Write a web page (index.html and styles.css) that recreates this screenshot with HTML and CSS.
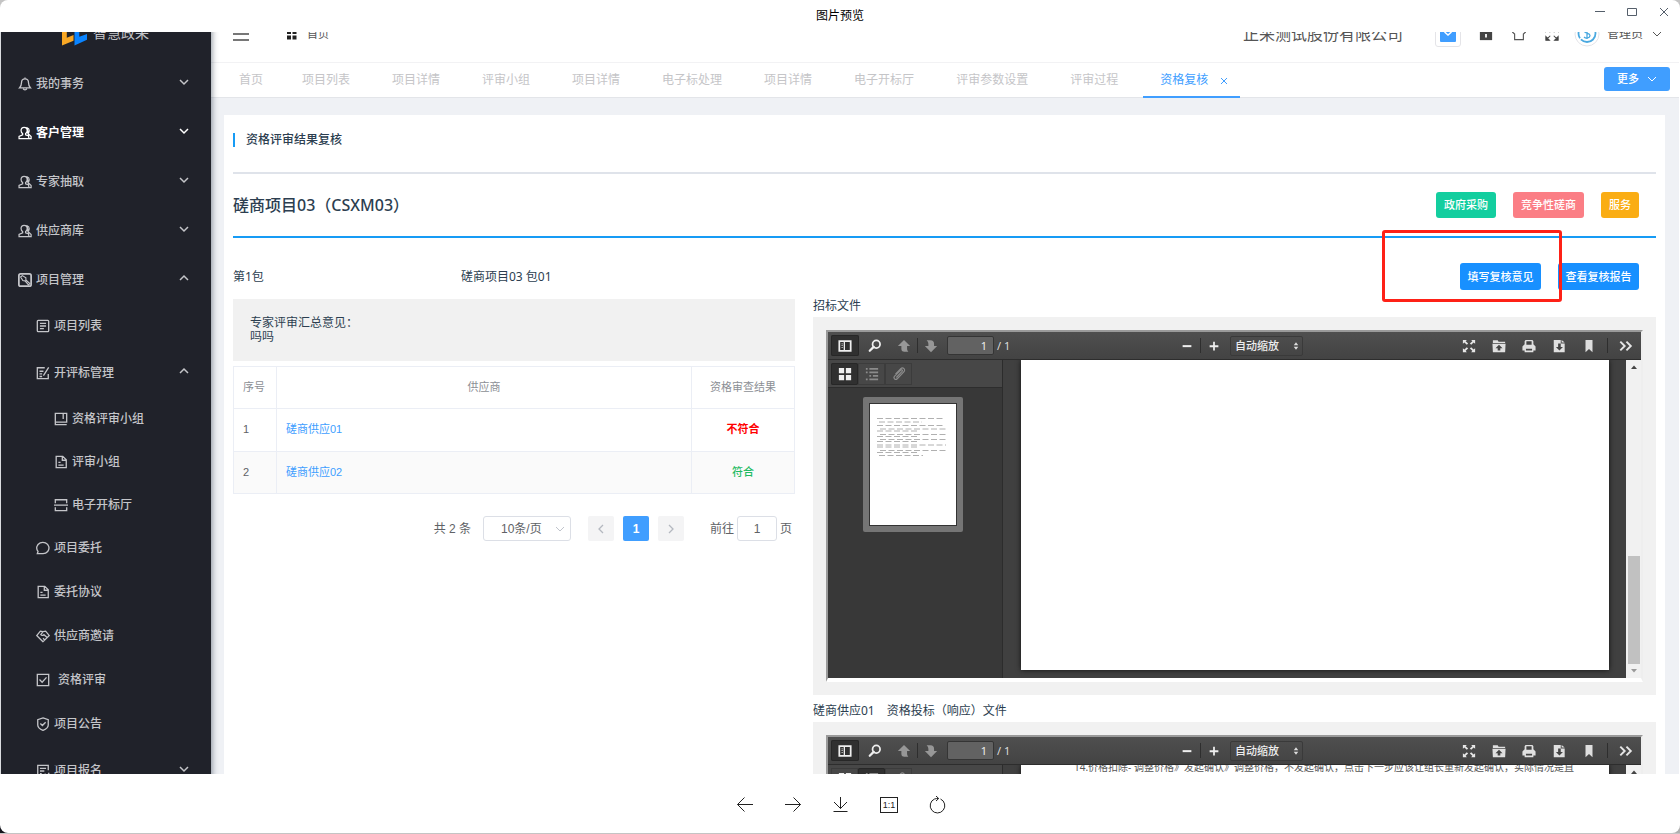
FILE: index.html
```html
<!DOCTYPE html>
<html lang="zh-CN">
<head>
<meta charset="utf-8">
<title>图片预览</title>
<link rel="stylesheet" href="styles.css">
</head>
<body>
<svg class="sprite" aria-hidden="true">
  <symbol id="down" viewBox="0 0 10 10"><path d="M1 3l4 4 4-4" fill="none" stroke="currentColor"/></symbol>
  <symbol id="up" viewBox="0 0 10 10"><path d="M1 7l4-4 4 4" fill="none" stroke="currentColor"/></symbol>
  <symbol id="user" viewBox="0 0 16 16"><path d="M7 1.500c-2.200 0-3.500 1.600-3.500 3.700 0 1.600.8 2.800 1.800 3.500v1.500L1.200 12v2.300H13M7 1.500c2.200 0 3.500 1.600 3.500 3.700 0 1.600-.8 2.800-1.800 3.500v1.500l2.500 1M10.500 2c1.700.5 2.300 1.700 2.300 3.300 0 1.500-.6 2.400-1.400 3.200L15 12v2.300h-2.500z" fill="none" stroke="currentColor" stroke-width="1.400"/></symbol>
  <symbol id="file" viewBox="0 0 16 16"><path d="M2.500 1.500h7.500l4 4v9H2.500zM9.500 1.500V6H14M5 8.500h2.500M5 11.500h6" fill="none" stroke="currentColor" stroke-width="1.500"/></symbol>
  <symbol id="p-side" viewBox="0 0 16 16"><path d="M1.500 2.500h13v11h-13z" fill="none" stroke="#eee" stroke-width="2"/><path d="M4 5h1.500v1H4zM4 7h1.500v1H4zM4 9h1.500v1H4zM6.500 3h1.500v10H6.500z" fill="#eee"/></symbol>
  <symbol id="p-find" viewBox="0 0 16 16"><circle cx="9.500" cy="6" r="4.300" fill="none" stroke="#eee" stroke-width="2"/><path d="M6.500 9L2 13.500" stroke="#eee" stroke-width="2.600" stroke-linecap="round"/></symbol>
  <symbol id="p-prev" viewBox="0 0 16 16"><path d="M8 1l7 7h-3.500v2.500c0 2 .5 2.800 1.500 4H8.500C6 14.500 5 13 5 11V8H1z" fill="#979797"/></symbol>
  <symbol id="p-next" viewBox="0 0 16 16"><path d="M8 15l7-7h-3.500V5.500C11.500 3 10 1.500 7.500 1.500H3C4.500 3 5 4 5 6v2H1z" fill="#979797"/></symbol>
  <symbol id="p-minus" viewBox="0 0 16 16"><path d="M3 7h10v2.300H3z" fill="#eee"/></symbol>
  <symbol id="p-plus" viewBox="0 0 16 16"><path d="M3 7h4V3h2v4h4v2.300H9V13H7V9.300H3z" fill="#eee"/></symbol>
  <symbol id="p-full" viewBox="0 0 16 16"><path d="M1 1h4.500L4.200 2.500 7 5.200 5.500 6.500 2.700 3.900 1 5.500zM15 1h-4.500l1.300 1.500L9 5.200l1.500 1.300 2.800-2.600L15 5.500zM1 15h4.500l-1.300-1.500L7 10.800 5.500 9.500l-2.800 2.600L1 10.500zM15 15h-4.500l1.300-1.500L9 10.800l1.500-1.300 2.800 2.600 1.700-1.600z" fill="#e6e6e6"/></symbol>
  <symbol id="p-open" viewBox="0 0 16 16"><path d="M1 1.500h5.500l1 1.500H15v1.500H1zM.5 5.500h15L15 15H1z" fill="#e0e0e0"/><path d="M8 6.500l4 4H9.500V13h-3v-2.500H4z" fill="#444"/></symbol>
  <symbol id="p-print" viewBox="0 0 16 16"><path d="M4 1h8l1 1.500V6l2.500 2.500V13H13v2H3v-2H.5V8.500L3 6V2.500z" fill="#e0e0e0"/><path d="M5 2.500h6v4H5zM4.500 11h7v2h-7z" fill="#444"/></symbol>
  <symbol id="p-save" viewBox="0 0 16 16"><path d="M2 1h8v4h4.500v10H2zM11 1l3.500 3H11z" fill="#e0e0e0"/><path d="M7 5h3v4h2.500L8.500 13l-4-4H7z" fill="#444"/></symbol>
  <symbol id="p-mark" viewBox="0 0 16 16"><path d="M4 1h8v14l-4-3.500L4 15z" fill="#dedede"/></symbol>
  <symbol id="p-more" viewBox="0 0 16 16"><path d="M1.500 3l5 5-5 5M8.500 3l5 5-5 5" fill="none" stroke="#e6e6e6" stroke-width="2.200"/></symbol>
  <symbol id="p-grid" viewBox="0 0 16 16"><path d="M1 1h6v6H1zM9 1h6v6H9zM1 9h6v6H1zM9 9h6v6H9z" fill="#eee"/></symbol>
  <symbol id="p-list" viewBox="0 0 16 16"><path d="M1 1h2v2H1zM5 1h10v2H5zM1 5h2v2H1zM5 5h10v2H5zM5 9h2v2H5zM9 9h6v2H9zM1 13h2v2H1zM5 13h10v2H5z" fill="#8b8b8b"/></symbol>
  <symbol id="p-clip" viewBox="0 0 16 16"><path d="M5 12l6.500-7c1-1.300-.5-2.500-1.500-1.500L3 10.500c-2 2 .8 5 3 3l7.500-8C16 3 12.500-.5 10 2L4 8.300" fill="none" stroke="#8b8b8b" stroke-width="1.400"/></symbol>
  <symbol id="p-sel" viewBox="0 0 8 12"><path d="M4 1l3 4H1zM4 11l3-4H1z" fill="#ddd"/></symbol>
</svg>

<div class="window">
  <header class="titlebar">
    <h1>图片预览</h1>
    <div class="controls">
      <button type="button" aria-label="最小化"><svg viewBox="0 0 12 12"><path d="M1 5.500h10"/></svg></button>
      <button type="button" aria-label="最大化"><svg viewBox="0 0 12 12"><path d="M1.500 2.500h9v7h-9z"/></svg></button>
      <button type="button" aria-label="关闭"><svg viewBox="0 0 12 12"><path d="M2 2l8 8M10 2l-8 8"/></svg></button>
    </div>
  </header>

  <div class="stage">
    <div class="app">
      <aside class="sidebar">
        <div class="brand">
          <svg viewBox="0 0 26 26"><path d="M0 3h5v15l7-3v6L0 26z" fill="#f9a825"/><path d="M13 0h5v17l8-3v6l-13 6z" fill="#0a84ff"/></svg>
          <span>智慧政采</span>
        </div>
        <nav>
          <ul class="menu">
            <li><button type="button" class="item l1"><svg viewBox="0 0 16 16"><path d="M8 .5v2M8 2.200c-3 0-4 2.200-4 4.500 0 3-1 4.500-2.300 5.800h12.600C13 11.200 12 9.700 12 6.700c0-2.300-1-4.500-4-4.500zM6 13.500c.5 1.500 3.500 1.500 4 0"/></svg>我的事务<svg class="arrow"><use href="#down"/></svg></button></li>
            <li><button type="button" class="item l1 active"><svg><use href="#user"/></svg>客户管理<svg class="arrow"><use href="#down"/></svg></button></li>
            <li><button type="button" class="item l1"><svg><use href="#user"/></svg>专家抽取<svg class="arrow"><use href="#down"/></svg></button></li>
            <li><button type="button" class="item l1"><svg><use href="#user"/></svg>供应商库<svg class="arrow"><use href="#down"/></svg></button></li>
            <li><button type="button" class="item l1"><svg viewBox="0 0 16 16"><rect x="1" y="1" width="14" height="14" rx="2" stroke-width="2"/><path d="M3 4.500l2-1.500 4 2.500v2.500l4.500 4-1.500 1.500-4-4.500L5.500 8.500z" stroke-width="1.300"/></svg>项目管理<svg class="arrow"><use href="#up"/></svg></button>
              <ul>
                <li><a href="#" class="item l2"><svg viewBox="0 0 16 16"><rect x="1.500" y="1.500" width="13" height="13" rx="1"/><path d="M4.500 5h7M4.500 8h7M4.500 11h4.500"/></svg>项目列表</a></li>
                <li><button type="button" class="item l2 tall"><svg viewBox="0 0 16 16"><path d="M10 2H1.500v12.500h12.500V9M4 6h4.500M4 9h3M4 12h3M8.500 11l6-9.500"/></svg>开评标管理<svg class="arrow"><use href="#up"/></svg></button>
                  <ul>
                    <li><a href="#" class="item l3"><svg viewBox="0 0 16 16"><path d="M14.500 11.500h-13v-10h13zM1.500 11.500v3h13M10.500 1.500V8"/></svg>资格评审小组</a></li>
                    <li><a href="#" class="item l3"><svg><use href="#file"/></svg>评审小组</a></li>
                    <li><a href="#" class="item l3"><svg viewBox="0 0 16 16"><path d="M1.500 6V2h13v4M1.500 10.500v4h13v-4M0 8.200h16"/></svg>电子开标厅</a></li>
                  </ul>
                </li>
                <li><a href="#" class="item l2"><svg viewBox="0 0 16 16"><path d="M3 14.500H1.500l.8-2.500A7 6.500 0 1 1 8 14.500z"/></svg>项目委托</a></li>
                <li><a href="#" class="item l2"><svg><use href="#file"/></svg>委托协议</a></li>
                <li><a href="#" class="item l2"><svg viewBox="0 0 16 16"><path d="M8 14.500L.8 7.500 5 2.500l3 .5 3-.5 4.200 5zM8 3L5.500 6.500c1 1.300 2.500 1 3.500 0l3.500 3M8 10.500l2 2"/></svg>供应商邀请</a></li>
                <li><a href="#" class="item l2 wide"><svg viewBox="0 0 16 16"><path d="M1.500 1.500h13v13h-13zM4 7.500l3 3 5-5.500"/></svg>资格评审</a></li>
                <li><a href="#" class="item l2"><svg viewBox="0 0 16 16"><path d="M8 1l6 2v6c0 3-3 5-6 6.300C5 14 2 12 2 9V3zM5 7.500l2.300 2.300L11 6"/></svg>项目公告</a></li>
                <li><button type="button" class="item l2 tall"><svg viewBox="0 0 16 16"><path d="M14 7V1.500H2v13h6M4.500 5h7M4.500 8h5M4.500 11h2M10 11l2.500 3.500L15 10"/></svg>项目报名<svg class="arrow"><use href="#down"/></svg></button></li>
              </ul>
            </li>
          </ul>
        </nav>
      </aside>

      <div class="body">
        <header class="topbar">
          <button type="button" class="burger" aria-label="折叠菜单"><i></i><i></i><i></i></button>
          <a href="#" class="crumb"><svg viewBox="0 0 10 10"><path d="M0 0h4v4H0zM5.500 0h4v4h-4zM0 5.500h4v4H0zM5.500 5.500h4v4h-4z" fill="#222"/></svg>首页</a>
          <span class="company">正采测试股份有限公司</span>
          <button type="button" class="mail" aria-label="消息"><svg viewBox="0 0 16 16"><rect width="16" height="16" rx="1" fill="#409eff"/><path d="M4.500 6L8 9l3.500-3" fill="none" stroke="#fff" stroke-width="1.500"/></svg></button>
          <button type="button" class="tool" aria-label="锁屏"><svg viewBox="0 0 16 16"><path d="M1 5h14v10H1z" fill="#444"/><path d="M4.500 6V1h7v5" fill="none" stroke="#444" stroke-width="1.500"/><path d="M7 8h2v4H7z" fill="#fff"/></svg></button>
          <button type="button" class="tool" aria-label="主题"><svg viewBox="0 0 16 16"><path d="M5 2L.8 6l2.200 2v6.500h10V8l2.200-2L11 2c-1 2-5 2-6 0z" fill="none" stroke="#555" stroke-width="1.300"/></svg></button>
          <button type="button" class="tool" aria-label="全屏"><svg viewBox="0 0 16 16"><path d="M1 1h4L1 5zM15 1h-4l4 4zM1 15v-4l4 4zM15 15v-4l-4 4zM3 3l3 3M13 3l-3 3M3 13l3-3M13 13l-3-3" fill="#444" stroke="#444" stroke-width="1.200"/></svg></button>
          <button type="button" class="user"><svg class="avatar" viewBox="0 0 26 26"><circle cx="13" cy="13" r="12" fill="#fff" stroke="#e3e3e8"/><circle cx="13" cy="12.500" r="8.500" fill="#fff" stroke="#4aa9e0" stroke-width="1.800" stroke-dasharray="20 1.500"/><path d="M16 9c-2-2-6-1-5.500 1.500.5 2 5.500 1.500 5.500 4S12 18 10 16M13 7v11" fill="none" stroke="#4aa9e0" stroke-width="1.300"/></svg>管理员<svg class="arrow"><use href="#down"/></svg></button>
        </header>

        <div class="tabs">
          <nav>
            <a href="#" class="home">首页</a><a href="#">项目列表</a><a href="#">项目详情</a><a href="#">评审小组</a><a href="#">项目详情</a><a href="#">电子标处理</a><a href="#">项目详情</a><a href="#">电子开标厅</a><a href="#">评审参数设置</a><a href="#">评审过程</a><a href="#" class="on">资格复核<svg viewBox="0 0 8 8"><path d="M1 1l6 6M7 1L1 7" stroke="currentColor"/></svg></a>
          </nav>
          <button type="button" class="more">更多<svg><use href="#down"/></svg></button>
        </div>

        <main class="card">
          <h2 class="section">资格评审结果复核</h2>
          <div class="project">
            <h3>磋商项目03（CSXM03）</h3>
            <span class="tag green">政府采购</span>
            <span class="tag pink">竞争性磋商</span>
            <span class="tag amber">服务</span>
          </div>
          <div class="package">
            <span class="no">第1包</span>
            <span class="name">磋商项目03 包01</span>
            <div class="marked"><button type="button" class="act">填写复核意见</button></div>
            <button type="button" class="act">查看复核报告</button>
          </div>

          <div class="columns">
            <section class="left">
              <div class="opinion"><p>专家评审汇总意见：</p><p>吗吗</p></div>
              <table>
                <thead><tr><th class="c-no">序号</th><th>供应商</th><th class="c-res">资格审查结果</th></tr></thead>
                <tbody>
                  <tr><td>1</td><td><a href="#">磋商供应01</a></td><td class="bad">不符合</td></tr>
                  <tr><td>2</td><td><a href="#">磋商供应02</a></td><td class="good">符合</td></tr>
                </tbody>
              </table>
              <div class="pager">
                <span class="total">共 2 条</span>
                <label class="size"><select aria-label="每页条数"><option>10条/页</option></select><svg><use href="#down"/></svg></label>
                <button type="button" class="pg" aria-label="上一页"><svg viewBox="0 0 10 10"><path d="M7 1L3 5l4 4" fill="none" stroke="currentColor" stroke-width="1.300"/></svg></button>
                <button type="button" class="pg on">1</button>
                <button type="button" class="pg" aria-label="下一页"><svg viewBox="0 0 10 10"><path d="M3 1l4 4-4 4" fill="none" stroke="currentColor" stroke-width="1.300"/></svg></button>
                <label class="jump">前往<input type="text" value="1">页</label>
              </div>
            </section>

            <section class="right">
              <h4>招标文件</h4>
              <div class="frame">
                <div class="pdf">
                  <div class="bar">
                    <div class="group">
                      <button type="button" class="toggled" aria-label="切换侧栏"><svg><use href="#p-side"/></svg></button>
                      <button type="button" class="find" aria-label="查找"><svg><use href="#p-find"/></svg></button>
                      <button type="button" aria-label="上一页"><svg><use href="#p-prev"/></svg></button><i class="sep"></i><button type="button" aria-label="下一页"><svg><use href="#p-next"/></svg></button>
                      <input type="text" value="1" aria-label="页码"><span>/ 1</span>
                    </div>
                    <div class="group mid">
                      <button type="button" aria-label="缩小"><svg><use href="#p-minus"/></svg></button><i class="sep"></i><button type="button" aria-label="放大"><svg><use href="#p-plus"/></svg></button>
                      <label class="zoom"><select aria-label="缩放"><option>自动缩放</option></select><svg><use href="#p-sel"/></svg></label>
                    </div>
                    <div class="group end">
                      <button type="button" aria-label="演示模式"><svg><use href="#p-full"/></svg></button>
                      <button type="button" aria-label="打开"><svg><use href="#p-open"/></svg></button>
                      <button type="button" aria-label="打印"><svg><use href="#p-print"/></svg></button>
                      <button type="button" aria-label="下载"><svg><use href="#p-save"/></svg></button>
                      <button type="button" aria-label="当前视图"><svg><use href="#p-mark"/></svg></button>
                      <i class="sep"></i>
                      <button type="button" aria-label="工具"><svg><use href="#p-more"/></svg></button>
                    </div>
                  </div>
                  <div class="work">
                    <div class="side">
                      <div class="sidebar-tabs">
                        <button type="button" class="toggled" aria-label="缩略图"><svg><use href="#p-grid"/></svg></button><button type="button" aria-label="大纲"><svg><use href="#p-list"/></svg></button><button type="button" aria-label="附件"><svg><use href="#p-clip"/></svg></button>
                      </div>
                      <div class="thumb"><svg viewBox="0 0 86 121"><g stroke="#b0b0b0" stroke-width="1" stroke-dasharray="6 2.500"><path d="M7 14.500h68M7 21.500h68M10 25h66M10 30.500h66M10 35.500h66M7 41h69M10 46.500h66"/><path d="M9 18h43M7 27h40M7 32.500h40M7 37.500h40M7 43h40M7 48.500h40M9 51.500h44"/></g></svg></div>
                    </div>
                    <div class="canvas"><div class="page"></div></div>
                    <div class="scroll"><svg viewBox="0 0 8 4"><path d="M1 4l3-3.500L7 4z" fill="#444"/></svg><i></i><svg viewBox="0 0 8 4"><path d="M1 0l3 3.500L7 0z" fill="#999"/></svg></div>
                  </div>
                </div>
              </div>

              <h4>磋商供应01　资格投标（响应）文件</h4>
              <div class="frame">
                <div class="pdf">
                  <div class="bar">
                    <div class="group">
                      <button type="button" class="toggled" aria-label="切换侧栏"><svg><use href="#p-side"/></svg></button>
                      <button type="button" class="find" aria-label="查找"><svg><use href="#p-find"/></svg></button>
                      <button type="button" aria-label="上一页"><svg><use href="#p-prev"/></svg></button><i class="sep"></i><button type="button" aria-label="下一页"><svg><use href="#p-next"/></svg></button>
                      <input type="text" value="1" aria-label="页码"><span>/ 1</span>
                    </div>
                    <div class="group mid">
                      <button type="button" aria-label="缩小"><svg><use href="#p-minus"/></svg></button><i class="sep"></i><button type="button" aria-label="放大"><svg><use href="#p-plus"/></svg></button>
                      <label class="zoom"><select aria-label="缩放"><option>自动缩放</option></select><svg><use href="#p-sel"/></svg></label>
                    </div>
                    <div class="group end">
                      <button type="button" aria-label="演示模式"><svg><use href="#p-full"/></svg></button>
                      <button type="button" aria-label="打开"><svg><use href="#p-open"/></svg></button>
                      <button type="button" aria-label="打印"><svg><use href="#p-print"/></svg></button>
                      <button type="button" aria-label="下载"><svg><use href="#p-save"/></svg></button>
                      <button type="button" aria-label="当前视图"><svg><use href="#p-mark"/></svg></button>
                      <i class="sep"></i>
                      <button type="button" aria-label="工具"><svg><use href="#p-more"/></svg></button>
                    </div>
                  </div>
                  <div class="work">
                    <div class="side">
                      <div class="sidebar-tabs">
                        <button type="button" aria-label="缩略图"><svg><use href="#p-grid"/></svg></button><button type="button" class="toggled" aria-label="大纲"><svg><use href="#p-list"/></svg></button><button type="button" aria-label="附件"><svg><use href="#p-clip"/></svg></button>
                      </div>
                    </div>
                    <div class="canvas"><div class="page"><p>14.价格扣除- 调整价格》发起确认》调整价格，不发起确认，点击下一步应该让组长重新发起确认，实际情况是直</p></div></div>
                    <div class="scroll"><svg viewBox="0 0 8 4"><path d="M1 4l3-3.500L7 4z" fill="#444"/></svg></div>
                  </div>
                </div>
              </div>
            </section>
          </div>
        </main>
      </div>
    </div>
  </div>

  <footer class="viewer-tools">
    <button type="button" aria-label="上一张"><svg viewBox="0 0 18 18"><path d="M17 8.500H1.500M8.500 1.500l-7 7 7 7"/></svg></button>
    <button type="button" aria-label="下一张"><svg viewBox="0 0 18 18"><path d="M1 8.500h15.500M9.500 1.500l7 7-7 7"/></svg></button>
    <button type="button" aria-label="下载"><svg viewBox="0 0 18 18"><path d="M8.500 1v11.500M2 6l6.500 6.500L15 6M1.500 15.500h14"/></svg></button>
    <button type="button" class="ratio" aria-label="原始大小">1:1</button>
    <button type="button" aria-label="旋转"><svg viewBox="0 0 18 18"><path d="M12.500 3a7.300 7.300 0 1 1-6 0C8 2.500 9 2.500 10.500 2.500M8 0l2.700 2.500L8 5"/></svg></button>
  </footer>
</div>
</body>
</html>
```
FILE: styles.css
```css
* { box-sizing: border-box; }
body {
  margin: 0;
  background: linear-gradient(90deg, #15151c 142px, #b0b0b0 143px) bottom / 100% 12px no-repeat, #c4c4c4;
  font: 12px/16px "Noto Sans", "Noto Sans CJK SC", sans-serif;
  color: #2c3e50;
}
button, input, select { font: inherit; color: inherit; margin: 0; padding: 0; border: 0; background: none; }
button { cursor: pointer; display: flex; align-items: center; justify-content: center; }
a { color: inherit; text-decoration: none; }
ul { list-style: none; margin: 0; padding: 0; }
h1, h2, h3, h4, p { margin: 0; font-weight: 400; font-size: inherit; }
svg { display: block; flex: none; }
.sprite { position: absolute; width: 0; height: 0; }

.window { height: calc(100vh - 1px); display: flex; flex-direction: column; background: #fff; border-radius: 8px; overflow: hidden; }
.titlebar { flex: none; height: 32px; display: grid; grid-template-columns: 1fr auto 1fr; }
.titlebar h1 { grid-column: 2; color: #000; line-height: 32px; }
.controls { display: flex; justify-content: flex-end; }
.controls button { width: 32px; height: 24px; }
.controls svg { width: 12px; height: 12px; fill: none; stroke: #555f6b; }
.stage { flex: 1; min-height: 0; overflow: hidden; padding: 0 1px; }
.app { display: flex; margin-top: -30px; }

.sidebar { flex: none; width: 210px; background: #20222a; color: #c4c5c9; box-shadow: 1px 0 6px rgba(0, 21, 41, .45); z-index: 1; }
.brand { height: 57px; display: flex; align-items: center; gap: 6px; padding: 4px 0 0 61px; font-size: 14px; }
.brand svg { width: 25px; height: 26px; }
.item { width: 100%; height: 44px; display: flex; align-items: center; justify-content: flex-start; gap: 4px; padding-right: 22px; font-weight: 500; }
.item svg { width: 14px; height: 14px; fill: none; stroke: currentColor; stroke-width: 1.5; }
.item .arrow { width: 10px; height: 10px; margin: 0 0 4px auto; stroke: none; }
.l1, .tall { height: 49px; }
.l1 { padding-left: 17px; }
.l2 { padding-left: 35px; }
.l3 { height: 43px; padding-left: 53px; }
.wide { gap: 8px; }
.active { color: #fff; font-weight: 700; }

.body { flex: 1; min-width: 0; background: #eff1f5; }
.topbar { height: 61px; display: flex; align-items: center; background: #fff; border-bottom: 1px solid #f2f2f4; padding: 3px 17px 0 22px; color: #555; }
.burger { flex-direction: column; gap: 4px; width: 16px; margin-right: 38px; }
.burger i { width: 16px; height: 2px; background: #777; }
.crumb { display: flex; align-items: center; gap: 10px; font-size: 11px; }
.crumb svg { width: 10px; height: 10px; margin-top: 2px; }
.company { margin-left: auto; font-size: 16px; line-height: 20px; }
.mail { width: 26px; height: 26px; margin: 0 17px 0 32px; border: 1px solid #e4e4e8; border-radius: 3px; }
.mail svg { width: 16px; height: 16px; }
.tool { width: 16px; margin-right: 17px; }
.tool:nth-last-child(2) { margin-right: 14px; }
.tool svg { width: 14px; height: 16px; }
.user { gap: 7px; }
.user .avatar { width: 26px; height: 26px; }
.user .arrow { width: 10px; height: 10px; margin-left: 2px; }

.tabs { height: 35px; display: flex; justify-content: space-between; background: #fff; border-bottom: 1px solid #e3e5e9; padding: 0 9px 0 7px; }
.tabs nav { display: flex; line-height: 34px; color: #c5c5c8; }
.tabs a { padding: 0 21px; }
.tabs .home { padding-right: 18px; }
.tabs .on { display: flex; align-items: center; gap: 12px; height: 35px; margin-left: 4px; padding: 0 12px 0 17px; color: #409eff; border-bottom: 2px solid #409eff; }
.tabs .on svg { width: 8px; height: 8px; margin-top: 2px; }
.more { gap: 8px; width: 66px; height: 24px; margin-top: 4px; border-radius: 3px; background: #409eff; color: #fff; font-size: 11px; font-weight: 500; }
.more svg { width: 10px; height: 10px; }

.card { margin: 17px 14px 0 13px; padding: 0 9px 20px; background: #fff; }
.section { height: 59px; padding: 17px 0 0 13px; border-bottom: 2px solid #dfe3ea; font-weight: 500; background: linear-gradient(#169bf5, #169bf5) 0 18px / 2px 14px no-repeat; }
.project { display: flex; align-items: center; gap: 17px; height: 64px; padding-right: 17px; border-bottom: 2px solid #169bf5; }
.project h3 { flex: 1; font-size: 16px; font-weight: 500; }
.tag { padding: 0 8px; border-radius: 3px; line-height: 26px; font-size: 11px; font-weight: 500; color: #fff; }
.green { background: #13ce9f; }
.pink { background: #fb7e85; }
.amber { background: #faad14; }
.package { display: flex; align-items: center; height: 61px; padding: 16px 17px 0 0; }
.no { width: 228px; }
.name { flex: 1; }
.act { width: 81px; height: 27px; border-radius: 3px; background: #1890ff; color: #fff; font-size: 11px; font-weight: 500; }
.marked { position: relative; margin-right: 17px; }
.marked::after { content: ""; position: absolute; inset: -33px -21px -12px -78px; border: 3px solid #fe2117; border-radius: 3px; pointer-events: none; }

.columns { display: flex; gap: 18px; }
.left { flex: 2; min-width: 0; }
.right { flex: 3; min-width: 0; }
.opinion { height: 62px; padding: 17px 17px; line-height: 14px; background: #f1f1f1; margin-bottom: 5px; }
table { width: 100%; border-collapse: collapse; table-layout: fixed; font: 11px/16px "Liberation Sans", "Noto Sans CJK SC", sans-serif; color: #606266; }
th, td { height: 42px; padding: 0 9px 2px; border: 1px solid #ebeef5; }
th { font-weight: 400; color: #8c8f95; }
tbody tr:first-child td { height: 43px; }
.c-no { width: 43px; text-align: left; }
.c-res { width: 103px; }
tbody tr:nth-child(2) { background: #fafafa; }
td a { color: #409eff; }
.bad, .good { text-align: center; font-weight: 700; }
.bad { color: #f00; }
.good { color: #1fba63; font-weight: 500; }
.pager { display: flex; align-items: center; justify-content: flex-end; gap: 9px; margin-top: 22px; padding-right: 3px; font-family: "Liberation Sans", "Noto Sans CJK SC", sans-serif; color: #606266; }
.total { margin-right: 3px; }
.size { position: relative; margin-right: 8px; }
.size select { display: block; appearance: none; width: 88px; height: 25px; padding-left: 17px; border: 1px solid #dcdfe6; border-radius: 3px; background: #fff; }
.size svg { position: absolute; right: 6px; top: 8px; width: 10px; height: 10px; color: #c0c4cc; }
.pg { width: 26px; height: 25px; border-radius: 2px; background: #f4f4f5; color: #b4b8c0; }
.pg.on { background: #409eff; color: #fff; font-weight: 700; }
.pg svg { width: 10px; height: 10px; }
.jump { display: flex; align-items: center; gap: 3px; margin-left: 17px; }
.jump input { width: 40px; height: 25px; border: 1px solid #dcdfe6; border-radius: 3px; text-align: center; }

.right h4 { line-height: 14px; margin-bottom: 4px; }
.frame { padding: 13px; background: #f1f1f1; margin-bottom: 9px; }
.pdf { border: 2px solid #eee; border-top-color: #9a9a9a; border-left-color: #9a9a9a; border-bottom: 4px solid #fff; }
.bar { display: grid; grid-template-columns: 1fr auto 1fr; height: 28px; background: linear-gradient(#4f4f4f, #434343); border-bottom: 1px solid #2d2d2d; color: #ddd; font-size: 11px; }
.group { display: flex; align-items: center; padding: 0 3px; }
.group button { width: 26px; height: 21px; }
.pdf button svg { width: 14px; height: 14px; }
.group .toggled { width: 28px; }
.pdf .toggled { background: #303030; box-shadow: 0 0 0 1px #272727 inset; border-radius: 2px; }
.group .find { width: 32px; }
.sep { width: 1px; height: 15px; background: #2e2e2e; }
.group input { width: 47px; height: 19px; margin: 0 3px; padding-right: 6px; text-align: right; background: #626262; border: 1px solid #353535; border-radius: 2px; color: #eee; }
.zoom { position: relative; margin-left: 3px; }
.zoom select { display: block; appearance: none; width: 73px; height: 20px; padding-left: 4px; border: 1px solid #3a3a3a; border-radius: 2px; color: #eee; font-weight: 500; }
.zoom svg { position: absolute; right: 4px; top: 5px; width: 6px; height: 10px; }
.mid { padding: 0 0 0 8px; }
.end { justify-content: flex-end; gap: 4px; padding-right: 2px; }
.end .sep { margin: 0 1px; }
.work { display: flex; height: 318px; }
.side { flex: none; width: 175px; background: #383838; border-right: 1px solid #2c2c2c; }
.sidebar-tabs { display: flex; height: 28px; padding: 3px; background: #474747; border-bottom: 1px solid #2d2d2d; }
.sidebar-tabs button { width: 27px; height: 22px; box-shadow: 0 0 0 1px #3c3c3c inset; }
.thumb { width: 100px; margin: 9px auto 0 35px; padding: 7px; border-radius: 2px; background: #757575; }
.thumb svg { width: 86px; height: 121px; background: #fff; outline: 1px solid #333; }
.canvas { flex: 1; min-width: 0; padding: 0 17px 8px 18px; background: #404040; overflow: hidden; }
.page { height: 100%; background: #fff; box-shadow: 0 0 5px #111; overflow: hidden; }
.page p { margin: -5px 0 0 53px; font-size: 10px; line-height: 14px; white-space: nowrap; color: #555; }
.scroll { flex: none; width: 15px; display: flex; flex-direction: column; align-items: center; padding: 5px 0; background: #f1f1f1; }
.scroll svg { width: 8px; height: 4px; }
.scroll i { width: 12px; height: 108px; margin: auto 0 5px; background: #c1c1c1; }

.viewer-tools { flex: none; height: 59px; display: flex; align-items: center; justify-content: center; gap: 30px; color: #222; padding: 2px 0 0 2px; }
.viewer-tools button { width: 18px; height: 18px; }
.viewer-tools svg { width: 18px; height: 18px; fill: none; stroke: #222; }
.viewer-tools .ratio { height: 16px; border: 1px solid #222; font: 9px/14px "Liberation Sans", sans-serif; }
```
